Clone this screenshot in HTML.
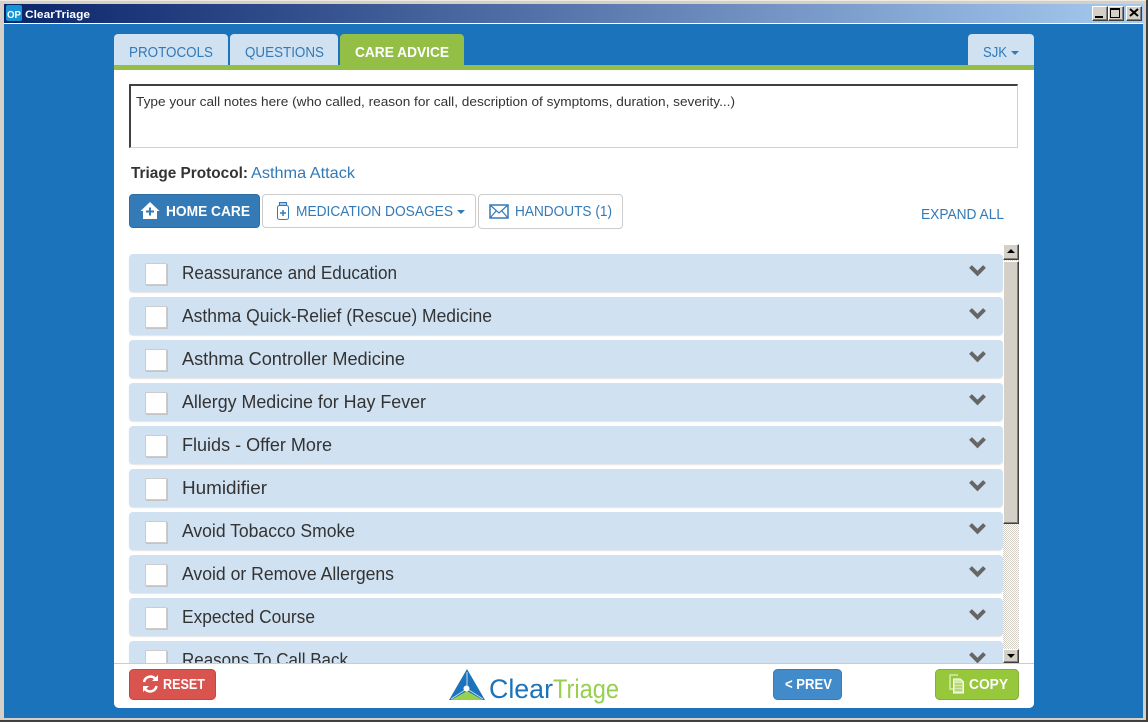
<!DOCTYPE html>
<html><head><meta charset="utf-8"><title>ClearTriage</title>
<style>
html,body{margin:0;padding:0;background:#d4d0c8}
#w{position:relative;width:1148px;height:722px;overflow:hidden;background:#d4d0c8}
#w div{position:absolute;box-sizing:border-box}
svg{position:absolute;left:0;top:0}
text{font-family:"Liberation Sans",sans-serif}
.tab{background:#d0e1f1;border-radius:4px 4px 0 0;top:34px;height:31px}
.item{left:129px;width:874px;height:38px;background:#d0e1f1;border-radius:4px;box-shadow:0 1px 1px #e4e4e4}
.cb{left:145px;width:22px;height:22px;background:#fff;border:1px solid #ccc;box-shadow:1px 1px 0 #c4c4c4}
.btn{border-radius:4px}
.win{background:#d4d0c8;border:1px solid;border-color:#fff #404040 #404040 #fff;box-shadow:inset -1px -1px 0 #808080}
</style></head><body><div id="w">
<div style="left:0;top:0;width:1148px;height:1px;background:#eeeae2"></div>
<div style="left:0;top:720px;width:1148px;height:2px;background:#404040"></div>
<div style="left:1146px;top:0;width:2px;height:722px;background:#404040"></div>
<div style="left:4px;top:4px;width:1139px;height:19px;background:linear-gradient(90deg,#0a246a,#a6caf0)"></div>
<div style="left:4px;top:23px;width:1139px;height:1px;background:#fff"></div>
<div style="left:4px;top:24px;width:1139px;height:694px;background:#1a73bb"></div>

<div style="left:6px;top:5px;width:16px;height:16px;background:#1593d3;border-radius:2px"></div>
<div class="win" style="left:1092px;top:6px;width:16px;height:15px"></div>
<div class="win" style="left:1108px;top:6px;width:16px;height:15px"></div>
<div class="win" style="left:1126px;top:6px;width:16px;height:15px"></div>
<div style="left:1095px;top:16px;width:8px;height:2px;background:#000"></div>
<div style="left:1110px;top:8px;width:10px;height:10px;border:1px solid #000;border-top-width:2px"></div>

<div class="tab" style="left:114px;width:114px"></div>
<div class="tab" style="left:230px;width:108px"></div>
<div class="tab" style="left:340px;width:124px;background:#93bf47"></div>
<div class="tab" style="left:968px;width:66px"></div>
<div style="left:114px;top:65px;width:920px;height:5px;background:#93bf47"></div>
<div style="left:114px;top:70px;width:920px;height:638px;background:#fff;border-radius:0 0 5px 5px"></div>

<div style="left:129px;top:84px;width:889px;height:64px;border:1px solid #d4d0c8;border-top:2px solid #404040;border-left:2px solid #404040"></div>

<div class="btn" style="left:129px;top:194px;width:131px;height:34px;background:#337ab7;border:1px solid #2e6da4"></div>
<div class="btn" style="left:262px;top:194px;width:214px;height:34px;background:#fff;border:1px solid #ccc"></div>
<div class="btn" style="left:478px;top:194px;width:145px;height:35px;background:#fff;border:1px solid #ccc"></div>

<div class="item" style="top:254px"></div><div class="cb" style="top:263px"></div>
<div class="item" style="top:297px"></div><div class="cb" style="top:306px"></div>
<div class="item" style="top:340px"></div><div class="cb" style="top:349px"></div>
<div class="item" style="top:383px"></div><div class="cb" style="top:392px"></div>
<div class="item" style="top:426px"></div><div class="cb" style="top:435px"></div>
<div class="item" style="top:469px"></div><div class="cb" style="top:478px"></div>
<div class="item" style="top:512px"></div><div class="cb" style="top:521px"></div>
<div class="item" style="top:555px"></div><div class="cb" style="top:564px"></div>
<div class="item" style="top:598px"></div><div class="cb" style="top:607px"></div>
<div class="item" style="top:641px"></div><div class="cb" style="top:650px"></div>

<div style="left:1003px;top:244px;width:16px;height:419px;background:repeating-conic-gradient(#d4d0c8 0 25%,#fff 0 50%) 0 0/2px 2px"></div>
<div class="win" style="left:1003px;top:244px;width:16px;height:16px"></div>
<div class="win" style="left:1003px;top:261px;width:16px;height:263px"></div>
<div class="win" style="left:1003px;top:649px;width:16px;height:14px"></div>

<svg width="1148" height="722" viewBox="0 0 1148 722">
 <!-- item text -->
 <g font-size="18" fill="#333">
  <text x="182" y="279" textLength="215" lengthAdjust="spacingAndGlyphs">Reassurance and Education</text>
  <text x="182" y="322" textLength="310" lengthAdjust="spacingAndGlyphs">Asthma Quick-Relief (Rescue) Medicine</text>
  <text x="182" y="365" textLength="223" lengthAdjust="spacingAndGlyphs">Asthma Controller Medicine</text>
  <text x="182" y="408" textLength="244" lengthAdjust="spacingAndGlyphs">Allergy Medicine for Hay Fever</text>
  <text x="182" y="451" textLength="150" lengthAdjust="spacingAndGlyphs">Fluids - Offer More</text>
  <text x="182" y="494" textLength="85" lengthAdjust="spacingAndGlyphs">Humidifier</text>
  <text x="182" y="537" textLength="173" lengthAdjust="spacingAndGlyphs">Avoid Tobacco Smoke</text>
  <text x="182" y="580" textLength="212" lengthAdjust="spacingAndGlyphs">Avoid or Remove Allergens</text>
  <text x="182" y="623" textLength="133" lengthAdjust="spacingAndGlyphs">Expected Course</text>
  <text x="182" y="666" textLength="166" lengthAdjust="spacingAndGlyphs">Reasons To Call Back</text>
 </g>
 <!-- chevrons -->
 <g fill="none" stroke="#666" stroke-width="4">
  <path d="M970.5 266.5l7 7 7-7"/><path d="M970.5 309.5l7 7 7-7"/><path d="M970.5 352.5l7 7 7-7"/>
  <path d="M970.5 395.5l7 7 7-7"/><path d="M970.5 438.5l7 7 7-7"/><path d="M970.5 481.5l7 7 7-7"/>
  <path d="M970.5 524.5l7 7 7-7"/><path d="M970.5 567.5l7 7 7-7"/><path d="M970.5 610.5l7 7 7-7"/>
  <path d="M970.5 653.5l7 7 7-7"/>
 </g>
 <!-- scroll arrows -->
 <path d="M1011 249l-4 4h8z" fill="#000"/>
 <path d="M1007 654h8l-4 4z" fill="#000"/>
 <!-- footer -->
 <path d="M114 663h920v40a5 5 0 0 1-5 5H119a5 5 0 0 1-5-5z" fill="#fff"/>
 <rect x="114" y="663" width="920" height="1" fill="#ccc"/>
 <rect x="129.500" y="669.500" width="86" height="30" rx="4" fill="#d9534f" stroke="#d43f3a"/>
 <rect x="773.500" y="669.500" width="68" height="30" rx="4" fill="#428bca" stroke="#357ebd"/>
 <rect x="935.500" y="669.500" width="83" height="30" rx="4" fill="#97c83c" stroke="#86ad3f"/>

 <!-- title -->
 <text x="25" y="18" font-size="11" font-weight="700" fill="#fff" textLength="65" lengthAdjust="spacingAndGlyphs">ClearTriage</text>
 <text x="7" y="18" font-size="10" font-weight="700" fill="#fff" textLength="14" lengthAdjust="spacingAndGlyphs">OP</text>
 <path d="M1130 9l8 7M1138 9l-8 7" stroke="#000" stroke-width="2"/>

 <!-- tabs -->
 <g font-size="14.500" fill="#337ab7">
  <text x="129" y="57" textLength="84" lengthAdjust="spacingAndGlyphs">PROTOCOLS</text>
  <text x="245" y="57" textLength="79" lengthAdjust="spacingAndGlyphs">QUESTIONS</text>
  <text x="983" y="57" textLength="24" lengthAdjust="spacingAndGlyphs">SJK</text>
 </g>
 <text x="355" y="57" font-size="15" font-weight="700" fill="#fff" textLength="94" lengthAdjust="spacingAndGlyphs">CARE ADVICE</text>
 <path d="M1011 51h8l-4 4z" fill="#337ab7"/>

 <!-- notes -->
 <text x="136" y="106" font-size="13" fill="#333" textLength="599" lengthAdjust="spacingAndGlyphs">Type your call notes here (who called, reason for call, description of symptoms, duration, severity...)</text>
 <text x="131" y="178" font-size="16" font-weight="700" fill="#333" textLength="117" lengthAdjust="spacingAndGlyphs">Triage Protocol:</text>
 <text x="251" y="178" font-size="16" fill="#337ab7" textLength="104" lengthAdjust="spacingAndGlyphs">Asthma Attack</text>

 <!-- toolbar -->
 <path d="M150 202l9.500 9h-2.500v8h-14v-8h-2.500z" fill="#fff"/>
 <path d="M150 207.500v8M146 211.500h8" stroke="#337ab7" stroke-width="2"/>
 <text x="166" y="216" font-size="15" font-weight="700" fill="#fff" textLength="84" lengthAdjust="spacingAndGlyphs">HOME CARE</text>
 <g fill="none" stroke="#337ab7">
  <rect x="279.500" y="202.500" width="7" height="3" fill="#a9c7e4"/>
  <rect x="277.500" y="205.500" width="11" height="14" rx="2"/>
  <path d="M283 210v6M280 213h6" stroke-width="1.500"/>
  <rect x="490" y="205" width="18" height="13" stroke-width="1.500"/>
  <path d="M490 205l9 8 9-8M490 218l6.500-7.500M508 218l-6.500-7.500" stroke-width="1.200"/>
 </g>
 <g font-size="14.500" fill="#337ab7">
  <text x="296" y="216" textLength="157" lengthAdjust="spacingAndGlyphs">MEDICATION DOSAGES</text>
  <text x="515" y="216" textLength="97" lengthAdjust="spacingAndGlyphs">HANDOUTS (1)</text>
  <text x="921" y="219" textLength="83" lengthAdjust="spacingAndGlyphs">EXPAND ALL</text>
 </g>
 <path d="M457 210h8l-4 4z" fill="#337ab7"/>

 <!-- reset icon -->
 <g fill="none" stroke="#fff" stroke-width="2.500">
  <path d="M144 682a6.500 6.500 0 0 1 11-3.500"/>
  <path d="M156.500 686a6.500 6.500 0 0 1-11 3.500"/>
 </g>
 <path d="M158 675v6h-6zM143 692v-6h6z" fill="#fff"/>
 <text x="163" y="689" font-size="14.500" font-weight="700" fill="#fff" textLength="42" lengthAdjust="spacingAndGlyphs">RESET</text>
 <text x="785" y="689" font-size="14.500" font-weight="700" fill="#fff" textLength="47" lengthAdjust="spacingAndGlyphs">&lt; PREV</text>
 <!-- copy icon -->
 <path d="M958 675h-8v14h3" fill="none" stroke="#d7e9b2" stroke-width="1.500"/>
 <path d="M953.500 679h7l3 3v11h-10z" fill="#d7e9b2" stroke="#fff"/>
 <path d="M955 684h7M955 687h7M955 690h7" stroke="#97c83c"/>
 <text x="969" y="689" font-size="14.500" font-weight="700" fill="#fff" textLength="39" lengthAdjust="spacingAndGlyphs">COPY</text>

 <!-- logo -->
 <path d="M467 669l-18 31h36z" fill="#1a73bb"/>
 <path d="M467 691l-16 9h32z" fill="#97cf4f"/>
 <path d="M467 672v14M451 699l14-9M483 699l-14-9" stroke="#fff" stroke-width="1" opacity=".75"/>
 <circle cx="466.500" cy="688.500" r="3" fill="#fff"/>
 <text x="489" y="698" font-size="27" fill="#1a73bb" textLength="64" lengthAdjust="spacingAndGlyphs">Clear</text>
 <text x="553" y="698" font-size="27" fill="#97cf4f" textLength="66" lengthAdjust="spacingAndGlyphs">Triage</text>
</svg>
</div></body></html>
